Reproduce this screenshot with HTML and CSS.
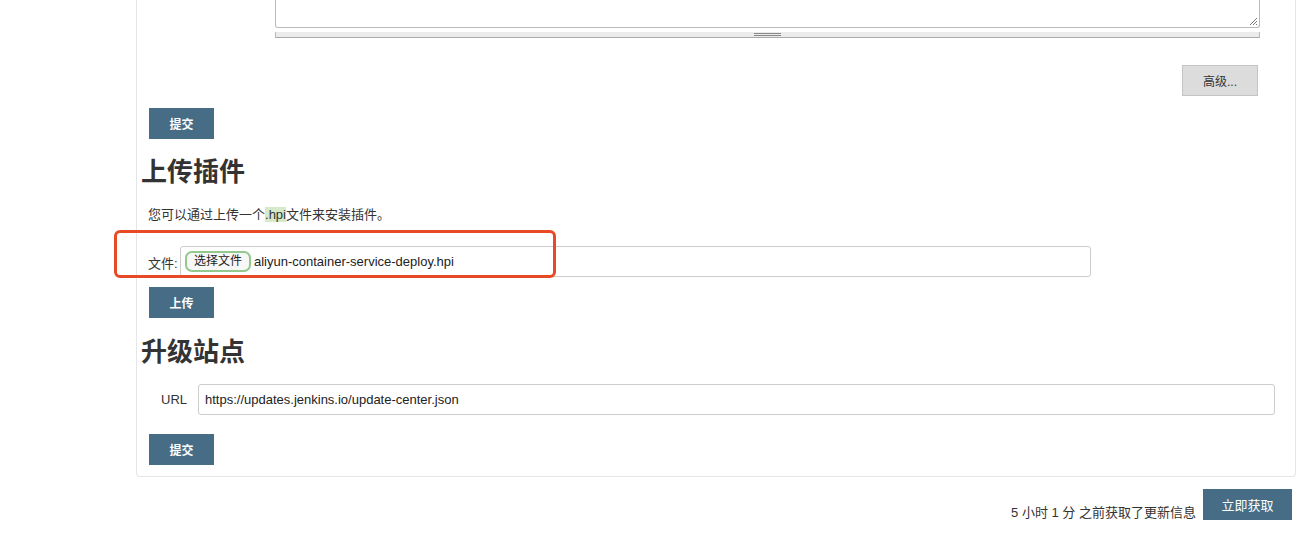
FILE: index.html
```html
<!DOCTYPE html>
<html lang="zh">
<head>
<meta charset="utf-8">
<link rel="stylesheet" href="styles.css">
</head>
<body>
<div class="page">
  <div class="panel">
    <div class="ta-wrap">
      <div class="ta">
        <svg class="grip" width="9" height="9" viewBox="0 0 9 9"><path d="M1 8 L8 1 M4 8 L8 4 M7 8 L8 7" stroke="#777" stroke-width="1" fill="none"/></svg>
      </div>
      <div class="ta-bar"><span class="ta-handle"></span></div>
    </div>
    <div class="adv-row"><button class="btn-adv">高级...</button></div>
    <button class="btn btn-submit1">提交</button>

    <h2 class="title t1">上传插件</h2>
    <p class="desc">您可以通过上传一个<span class="hl">.hpi</span>文件来安装插件。</p>
    <div class="file-row">
      <span class="label">文件:</span>
      <div class="file-input">
        <span class="choose">选择文件</span>
        <span class="fname">aliyun-container-service-deploy.hpi</span>
      </div>
      <div class="annot"></div>
    </div>
    <button class="btn btn-upload">上传</button>

    <h2 class="title t2">升级站点</h2>
    <div class="url-row">
      <span class="label url-label">URL</span>
      <div class="url-input">https://updates.jenkins.io/update-center.json</div>
    </div>
    <button class="btn btn-submit2">提交</button>
  </div>
  <div class="footer">
    <span class="ftext">5 小时 1 分 之前获取了更新信息</span>
    <button class="btn btn-fetch">立即获取</button>
  </div>
</div>
</body>
</html>
```
FILE: styles.css
```css
* { box-sizing: border-box; }
html, body { margin: 0; padding: 0; background: #fff; }
body {
  font-family: "Liberation Sans", "Noto Sans CJK SC", sans-serif;
  color: #333;
  font-size: 13px;
}
.page {
  margin-left: 136px;
  width: 1160px;
}
.panel {
  border: 1px solid #e6e6e6;
  border-top: none;
  border-radius: 0 0 4px 4px;
  padding: 0 0 11px 0;
  display: flex;
  flex-direction: column;
  align-items: flex-start;
}
.ta-wrap {
  margin-left: 138px;
  width: 985px;
  align-self: flex-start;
}
.ta {
  position: relative;
  height: 28px;
  border: 1px solid #bbb;
  border-top: none;
  border-radius: 0 0 3px 3px;
  background: #fff;
}
.grip {
  position: absolute;
  right: 1px;
  bottom: 1px;
}
.ta-bar {
  margin-top: 4px;
  height: 6px;
  background: #ebebeb;
  border-left: 1px solid #bbb;
  border-right: 1px solid #bbb;
  border-bottom: 1px solid #aaa;
  display: flex;
  justify-content: flex-start;
  padding-left: 478px;
}
.ta-handle {
  width: 27px;
  height: 3px;
  margin-top: 1px;
  border-top: 1px solid #888;
  border-bottom: 1px solid #888;
}
.adv-row {
  align-self: stretch;
  display: flex;
  justify-content: flex-end;
  margin-top: 27px;
  padding-right: 37px;
}
.btn-adv {
  width: 76px;
  height: 31px;
  background: #dcdcdc;
  border: 1px solid #c4c4c4;
  border-radius: 0;
  color: #333;
  font-family: inherit;
  font-size: 12px;
  padding: 0;
}
.btn {
  width: 65px;
  height: 31px;
  background: #466d85;
  color: #fff;
  border: none;
  border-radius: 0;
  font-family: inherit;
  font-size: 12px;
  font-weight: bold;
  padding: 0;
  margin-left: 12px;
}
.btn-submit1 { margin-top: 12px; }
.title {
  margin: 0;
  font-size: 26px;
  line-height: 32px;
  font-weight: bold;
  color: #333;
  margin-left: 4px;
}
.t1 { margin-top: 17px; }
.desc {
  margin: 18px 0 0 11px;
  line-height: 18px;
  font-size: 13px;
}
.hl { background: #d4eac9; }
.file-row {
  position: relative;
  margin-top: 22px;
  margin-left: 11px;
  display: flex;
  align-items: center;
}
.label { font-size: 13px; }
.file-row .label { width: 32px; padding-top: 1px; }
.file-input {
  width: 911px;
  height: 31px;
  border: 1px solid #ccc;
  border-radius: 3px;
  display: flex;
  align-items: center;
  padding-left: 4px;
}
.choose {
  width: 66px;
  height: 21px;
  border: 2.5px solid #94c98e;
  border-radius: 7px;
  background: #f7f7f7;
  font-size: 12px;
  line-height: 16px;
  text-align: center;
  color: #222;
}
.fname {
  margin-left: 3px;
  font-size: 13px;
  color: #222;
}
.annot {
  position: absolute;
  left: -34px;
  top: -16px;
  width: 442px;
  height: 48px;
  border: 3px solid #e84a26;
  border-radius: 6px;
  pointer-events: none;
}
.btn-upload { margin-top: 10px; }
.t2 { margin-top: 18px; }
.url-row {
  margin-top: 16px;
  margin-left: 24px;
  display: flex;
  align-items: center;
}
.url-label { width: 37px; }
.url-input {
  width: 1077px;
  height: 31px;
  border: 1px solid #ccc;
  border-radius: 3px;
  padding-left: 6px;
  line-height: 29px;
  font-size: 13px;
  color: #222;
}
.btn-submit2 { margin-top: 19px; }
.footer {
  margin-top: 12px;
  width: 1156px;
  display: flex;
  justify-content: flex-end;
  align-items: flex-end;
}
.ftext {
  font-size: 13px;
  line-height: 16px;
  margin-right: 7px;
  margin-bottom: -1px;
}
.btn-fetch {
  width: 89px;
  margin-left: 0;
  font-size: 13px;
  font-weight: normal;
}
```
